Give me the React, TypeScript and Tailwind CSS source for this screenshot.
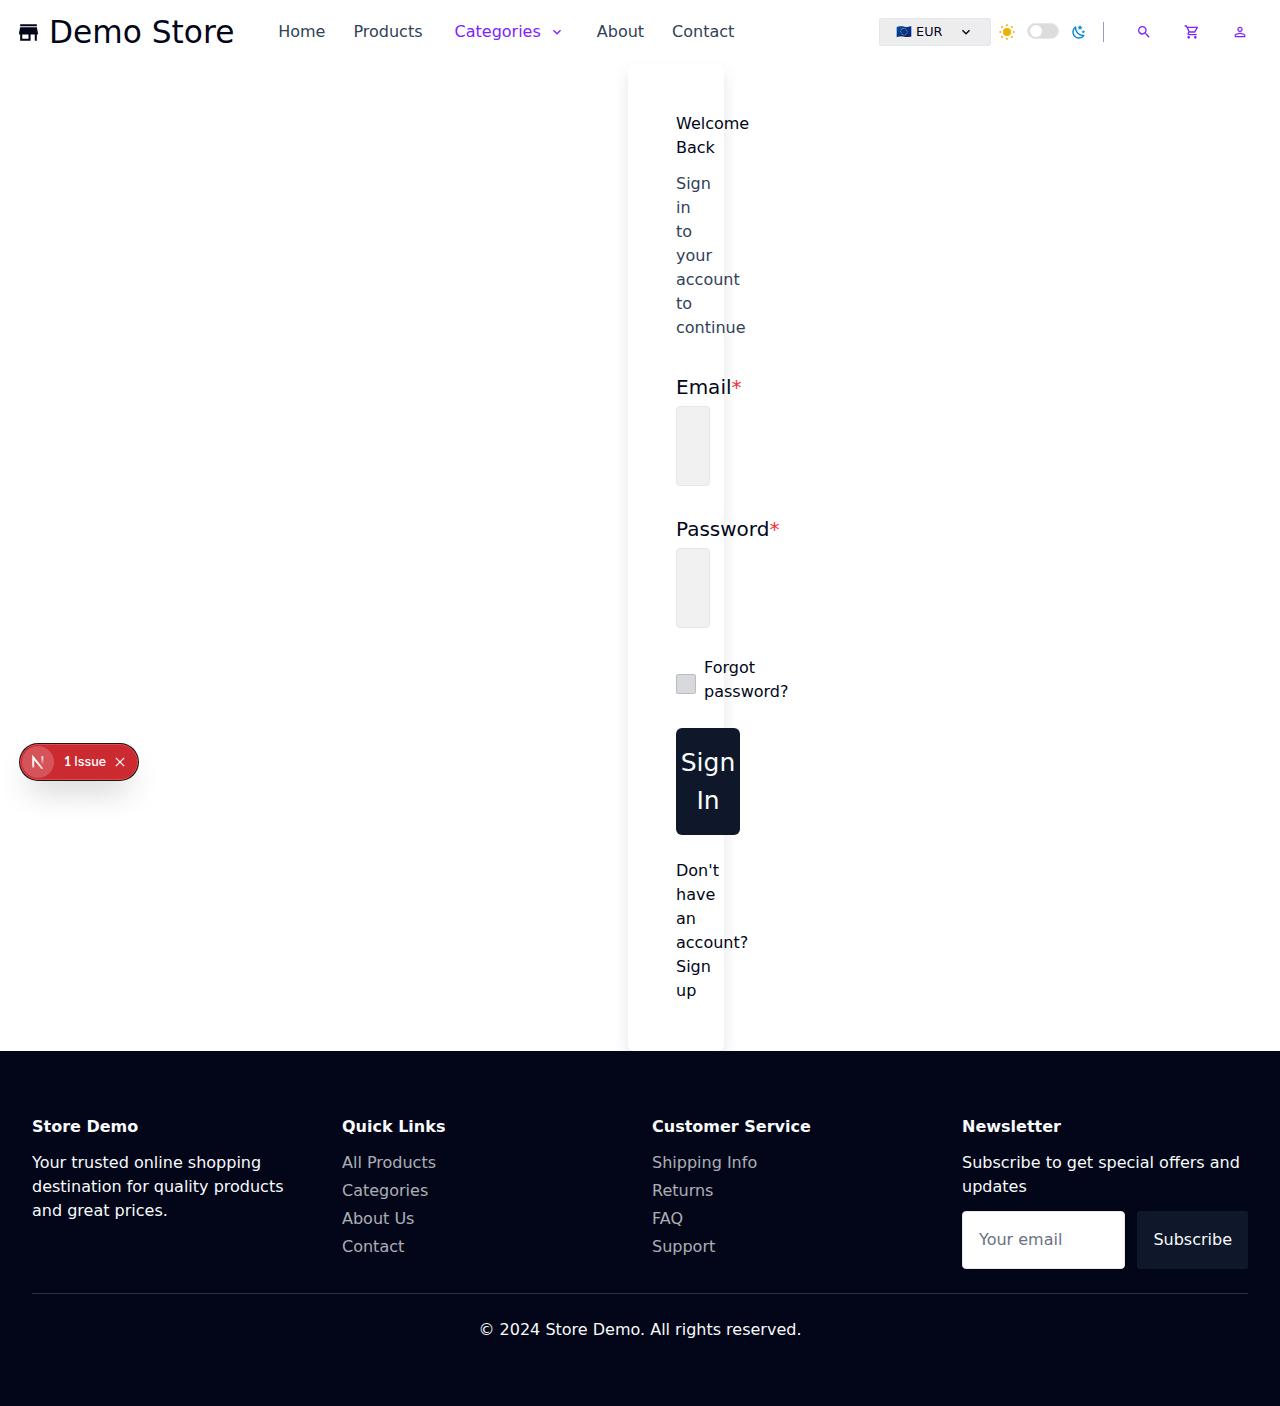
import React from 'react';
import { MdStore, MdSearch, MdOutlineShoppingCart, MdPersonOutline, MdExpandMore } from 'react-icons/md';

function SunIcon() {
  return (
    <svg viewBox="0 0 24 24" className="ml-2 size-4 text-[#f0b100]" fill="currentColor">
      <circle cx="12" cy="12" r="6" />
      <circle cx="12" cy="1.9" r="1.5" />
      <circle cx="12" cy="22.1" r="1.5" />
      <circle cx="1.9" cy="12" r="1.5" />
      <circle cx="22.1" cy="12" r="1.5" />
      <circle cx="4.6" cy="4.6" r="1.5" />
      <circle cx="19.4" cy="4.6" r="1.5" />
      <circle cx="4.6" cy="19.4" r="1.5" />
      <circle cx="19.4" cy="19.4" r="1.5" />
    </svg>
  );
}

function MoonIcon() {
  return (
    <svg viewBox="0 0 24 24" className="size-4 text-[#0284d1]" fill="currentColor">
      <path d="m17.75 4.09l-2.53 1.94l.91 3.06l-2.63-1.81l-2.63 1.81l.91-3.06l-2.53-1.94L12.44 4l1.06-3l1.06 3zm3.5 6.91l-1.64 1.25l.59 1.98l-1.7-1.17l-1.7 1.17l.59-1.98L15.75 11l2.06-.05L18.5 9l.69 1.95zm-2.28 4.95c.83-.08 1.72 1.1 1.19 1.85c-.32.45-.66.87-1.08 1.27C15.17 23 8.84 23 4.94 19.07c-3.91-3.9-3.91-10.24 0-14.14c.4-.4.82-.76 1.27-1.08c.75-.53 1.93.36 1.85 1.19c-.27 2.86.69 5.83 2.89 8.02a9.96 9.96 0 0 0 8.02 2.89m-1.64 2.02a12.08 12.08 0 0 1-7.8-3.47c-2.17-2.19-3.33-5-3.49-7.82c-2.81 3.14-2.7 7.96.31 10.98c3.02 3.01 7.84 3.12 10.98.31" />
    </svg>
  );
}

function Header() {
  return (
    <header className="flex h-16 items-center pl-4 pr-8">
      <a className="flex items-center gap-2 text-[31.25px] leading-none">
        <MdStore className="size-[25px]" />
        <span className="whitespace-nowrap pt-0.5">Demo Store</span>
      </a>
      <nav className="ml-[43.8px] flex items-center text-[#314158]">
        <a>Home</a>
        <a className="ml-7">Products</a>
        <a className="ml-8 flex items-center text-[#7f22fe]">
          Categories
          <MdExpandMore className="ml-2 size-4" />
        </a>
        <a className="ml-8">About</a>
        <a className="ml-7">Contact</a>
      </nav>
      <div className="ml-auto flex items-center">
        <button className="flex h-7 w-28 items-center justify-between rounded-xs border border-[#e2e8f0] bg-[#ededed] px-4 text-[12.8px]">
          <span>🇪🇺 EUR</span>
          <MdExpandMore className="size-4" />
        </button>
        <SunIcon />
        <div className="mb-0.5 ml-3 flex h-4 w-8 items-center rounded-full border border-[#e2e8f0] bg-[#dcdcdc] px-0.5">
          <div className="size-3 rounded-full bg-white" />
        </div>
        <div className="ml-3"><MoonIcon /></div>
        <div className="ml-4 h-5 w-px bg-[#90a1b9]" />
        <div className="ml-8 flex gap-8 text-[#7f22fe]">
          <MdSearch className="size-4" />
          <MdOutlineShoppingCart className="size-4" />
          <MdPersonOutline className="size-4" />
        </div>
      </div>
    </header>
  );
}

function Field({ label, type }: { label: string; type: string }) {
  return (
    <label className="block w-0">
      <span className="block whitespace-nowrap text-xl leading-[30px]">
        {label}<span className="text-[#fb2c36]">*</span>
      </span>
      <input type={type} className="mt-1 block h-20 w-[34px] rounded border border-[#e2e8f0] bg-[#f1f1f1] px-4" />
    </label>
  );
}

function SignIn() {
  return (
    <main className="flex h-[987px] pl-[628px]">
      <section className="h-full w-24 shrink-0 rounded-md bg-white p-12 shadow-[0_8px_16px_rgba(0,0,0,0.1)]">
        <div className="w-0">
          <h1>Welcome Back</h1>
          <p className="mt-3 text-[#314158]">Sign in to your account to continue</p>
          <form className="mt-8">
            <Field label="Email" type="email" />
            <div className="mt-7"><Field label="Password" type="password" /></div>
            <div className="mt-7 flex items-center gap-2">
              <span className="mt-2 size-5 shrink-0 rounded-xs border border-[#b9bcc0] bg-[#d8d9dd]" />
              <span className="w-0">Forgot password?</span>
            </div>
            <button type="button" className="mt-6 h-[107px] w-16 rounded-md bg-[#0f172a] text-[25px] leading-[37.5px] text-[#f8fafc]">
              Sign In
            </button>
          </form>
          <p className="mt-6">Don't have an account? Sign up</p>
        </div>
      </section>
    </main>
  );
}

function LinkColumn({ title, links }: { title: string; links: string[] }) {
  return (
    <div>
      <h4 className="font-bold">{title}</h4>
      <ul className="mt-3 flex flex-col gap-1 text-[#f8fafc]/70">
        {links.map((link) => <li key={link}>{link}</li>)}
      </ul>
    </div>
  );
}

function Footer() {
  return (
    <footer className="relative h-[355px] bg-[#020618] px-8 pt-16 text-[#f8fafc]">
      <div className="grid grid-cols-4 gap-6 border-b border-[#2f3240] pb-6">
        <div>
          <h4 className="font-bold">Store Demo</h4>
          <p className="mt-3">Your trusted online shopping destination for quality products and great prices.</p>
        </div>
        <LinkColumn title="Quick Links" links={['All Products', 'Categories', 'About Us', 'Contact']} />
        <LinkColumn title="Customer Service" links={['Shipping Info', 'Returns', 'FAQ', 'Support']} />
        <div>
          <h4 className="font-bold">Newsletter</h4>
          <p className="mt-3">Subscribe to get special offers and updates</p>
          <div className="mt-3 flex gap-3">
            <input placeholder="Your email" className="h-[58px] w-0 min-w-0 flex-1 rounded border border-[#e2e8f0] bg-white px-4 pb-0.5 placeholder:text-[#6a7282]" />
            <button className="h-[58px] rounded-xs bg-[#0f172a] px-4">Subscribe</button>
          </div>
        </div>
      </div>
      <p className="mt-6 text-center">© 2024 Store Demo. All rights reserved.</p>
    </footer>
  );
}

function IssueBadge() {
  return (
    <div className="absolute left-5 top-[744px] flex h-9 w-[118px] items-center rounded-full border border-[#e5484d] bg-[#ca2a30] pl-px text-white shadow-[0_0_0_1px_#171717,0_16px_32px_-8px_rgba(0,0,0,0.24)]">
      <div className="flex size-8 items-center justify-center rounded-full bg-white/20">
        <svg viewBox="0 0 14 14" className="size-3.5" fill="none" stroke="url(#fade)" strokeWidth="1.9">
          <defs>
            <linearGradient id="fade" gradientUnits="userSpaceOnUse" x1="0" y1="0" x2="0" y2="14">
              <stop offset="0.6" stopColor="#fff" />
              <stop offset="1" stopColor="#fff" stopOpacity="0.6" />
            </linearGradient>
            <linearGradient id="bar" gradientUnits="userSpaceOnUse" x1="0" y1="1" x2="0" y2="10">
              <stop stopColor="#fff" />
              <stop offset="1" stopColor="#fff" stopOpacity="0" />
            </linearGradient>
          </defs>
          <path d="M2.2 12.5V2.4L11.6 14" />
          <path d="M11.4 1.3V9.5" stroke="url(#bar)" />
        </svg>
      </div>
      <span className="ml-2.5 flex w-[42px] items-baseline justify-between whitespace-nowrap font-['Inter'] text-[12.5px] font-medium leading-none">
        <span className="font-['Lato'] font-bold">1</span>
        <span>Issue</span>
      </span>
      <svg viewBox="0 0 10 10" className="ml-[9px] size-2.5" fill="none" stroke="#fff" strokeWidth="1.2">
        <path d="M.8.8l8.4 8.4M9.2.8L.8 9.2" />
      </svg>
    </div>
  );
}

export default function App() {
  return (
    <div className="relative min-h-[1406px] bg-white font-['DejaVu_Sans',sans-serif] text-base text-[#020618]">
      <Header />
      <SignIn />
      <Footer />
      <IssueBadge />
    </div>
  );
}
